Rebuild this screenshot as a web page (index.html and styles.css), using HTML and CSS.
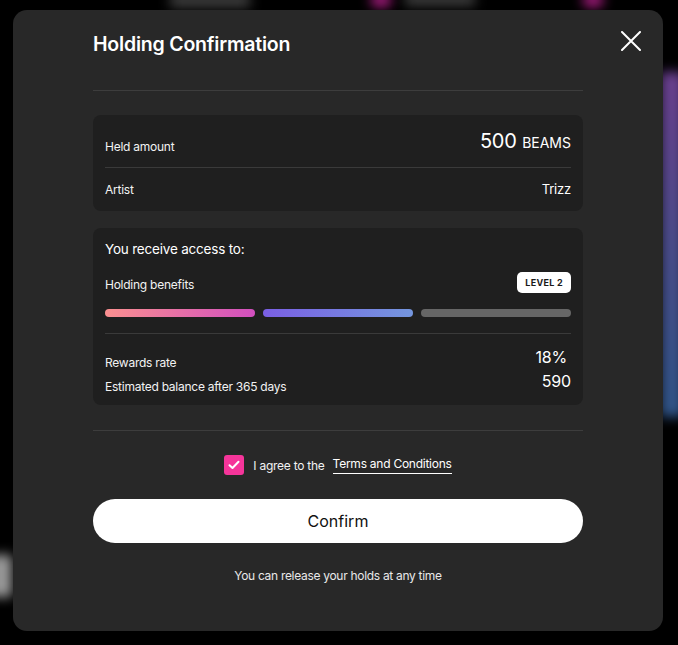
FILE: index.html
```html
<!DOCTYPE html>
<html lang="en">
<head>
  <meta charset="UTF-8">
  <title>Holding Confirmation</title>
  <link rel="stylesheet" href="styles.css">
</head>
<body>

  <div class="backdrop">
    <div class="blob blob-top-a"></div>
    <div class="blob blob-pink-a"></div>
    <div class="blob blob-top-b"></div>
    <div class="blob blob-pink-b"></div>
    <div class="blob blob-left"></div>
    <div class="blob blob-side"></div>
  </div>

  <div class="modal">
    <button class="close-btn" aria-label="Close">
      <svg width="20" height="20" viewBox="0 0 20 20">
        <path d="M1 1 L19 19 M19 1 L1 19" stroke="#fff" stroke-width="2" stroke-linecap="round"/>
      </svg>
    </button>

    <h1>Holding Confirmation</h1>
    <hr class="divider divider-top">

    <div class="card">
      <div class="row row-amount">
        <span class="label">Held amount</span>
        <span class="amount">500 <small>BEAMS</small></span>
      </div>
      <div class="row row-artist">
        <span class="label">Artist</span>
        <span class="value">Trizz</span>
      </div>
    </div>

    <div class="card card-access">
      <div class="access-title">You receive access to:</div>
      <div class="row row-benefits">
        <span class="label">Holding benefits</span>
        <span class="badge">LEVEL 2</span>
      </div>
      <div class="bars">
        <div class="bar bar-pink"></div>
        <div class="bar bar-blue"></div>
        <div class="bar bar-grey"></div>
      </div>
      <div class="stats">
        <div class="row stat-row">
          <span class="label">Rewards rate</span>
          <span class="stat rate">18%</span>
        </div>
        <div class="row stat-row">
          <span class="label">Estimated balance after 365 days</span>
          <span class="stat">590</span>
        </div>
      </div>
    </div>

    <hr class="divider divider-bottom">

    <label class="agree">
      <span class="checkbox">
        <svg width="12" height="10" viewBox="0 0 12 10">
          <path d="M1.5 5.2 L4.5 8 L10.5 1.8" fill="none" stroke="#fff" stroke-width="2" stroke-linecap="round" stroke-linejoin="round"/>
        </svg>
      </span>
      <span>I agree to the</span>
      <a href="#" class="terms">Terms and Conditions</a>
    </label>

    <button class="confirm-btn">Confirm</button>

    <p class="note">You can release your holds at any time</p>
  </div>

</body>
</html>
```

FILE: styles.css
```css
body {
  margin: 0;
  height: 645px;
  overflow: hidden;
  background: #000;
  font-family: 'Inter', 'Noto Sans', sans-serif;
  color: #fff;
  display: flex;
  justify-content: center;
  align-items: flex-start;
}

.backdrop {
  position: absolute;
  inset: 0;
  overflow: hidden;
}

.blob {
  position: absolute;
  filter: blur(6px);
}

.blob-top-a {
  left: 170px;
  top: -8px;
  width: 80px;
  height: 16px;
  background: #3a3a3a;
}

.blob-pink-a {
  left: 370px;
  top: -8px;
  width: 22px;
  height: 16px;
  border-radius: 50%;
  background: #a01a7a;
}

.blob-top-b {
  left: 405px;
  top: -8px;
  width: 70px;
  height: 14px;
  background: #3c3c3c;
}

.blob-pink-b {
  left: 582px;
  top: -8px;
  width: 22px;
  height: 16px;
  border-radius: 50%;
  background: #a01a7a;
}

.blob-left {
  left: -10px;
  top: 555px;
  width: 22px;
  height: 42px;
  background: #9a9a9a;
}

.blob-side {
  right: -6px;
  top: 72px;
  width: 24px;
  height: 345px;
  background: linear-gradient(180deg, #6a3f8e 0%, #4a4c8a 50%, #2f5487 100%);
}

.modal {
  position: relative;
  width: 650px;
  height: 621px;
  margin-top: 10px;
  margin-left: -2px;
  box-sizing: border-box;
  padding: 22px 80px 0;
  background: #282828;
  border-radius: 14px;
  display: flex;
  flex-direction: column;
}

.close-btn {
  position: absolute;
  top: 21px;
  right: 22px;
  width: 20px;
  height: 20px;
  padding: 0;
  border: none;
  background: none;
  cursor: pointer;
}

h1 {
  margin: 0;
  font-size: 19.5px;
  line-height: 24px;
  font-weight: 600;
  letter-spacing: -0.2px;
}

.divider {
  width: 100%;
  border: none;
  border-top: 1px solid #3d3d3d;
  margin: 0;
}

.divider-top {
  margin-top: 34px;
  margin-bottom: 24px;
}

.divider-bottom {
  margin-top: 25px;
  margin-bottom: 24px;
}

.card {
  background: #1f1f1f;
  border-radius: 8px;
  padding: 12px;
}

.card-access {
  margin-top: 17px;
}

.row {
  display: flex;
  justify-content: space-between;
  align-items: baseline;
}

.label {
  font-size: 12px;
  letter-spacing: -0.25px;
  color: #f2f2f2;
}

.row-amount {
  height: 28px;
  align-items: flex-end;
  padding-bottom: 12px;
  border-bottom: 1px solid #3a3a3a;
}

.row-amount .label {
  line-height: 16px;
}

.amount {
  font-size: 20px;
  line-height: 24px;
  letter-spacing: -0.2px;
}

.amount small {
  font-size: 14px;
  letter-spacing: 0;
}

.row-artist {
  padding-top: 12px;
  line-height: 19px;
}

.value {
  font-size: 13px;
  letter-spacing: -0.2px;
}

.access-title {
  font-size: 13.5px;
  line-height: 18px;
  letter-spacing: -0.2px;
}

.row-benefits {
  margin-top: 14px;
  align-items: flex-end;
}

.row-benefits .label {
  line-height: 16px;
}

.badge {
  background: #fff;
  color: #1a1a1a;
  font-size: 9px;
  font-weight: 700;
  letter-spacing: 0.3px;
  height: 21px;
  line-height: 21px;
  padding: 0 8px;
  border-radius: 5px;
}

.bars {
  display: flex;
  gap: 8px;
  margin-top: 16px;
  padding-bottom: 16px;
  border-bottom: 1px solid #3a3a3a;
}

.bar {
  flex: 1;
  height: 8px;
  border-radius: 4px;
}

.bar-pink {
  background: linear-gradient(90deg, #fb9090, #d24fbf);
}

.bar-blue {
  background: linear-gradient(90deg, #7a5fe4, #7496de);
}

.bar-grey {
  background: #666;
}

.stats {
  padding-top: 11px;
}

.stat-row {
  height: 24px;
  align-items: flex-end;
}

.stat-row .label {
  line-height: 13px;
}

.stat {
  font-size: 16px;
  line-height: 24px;
  letter-spacing: -0.2px;
}

.rate {
  margin-right: 4px;
}

.agree {
  display: flex;
  justify-content: center;
  align-items: center;
  font-size: 12px;
  letter-spacing: -0.25px;
  color: #f2f2f2;
  cursor: pointer;
}

.checkbox {
  width: 20px;
  height: 20px;
  border-radius: 3px;
  background: #f5359a;
  display: flex;
  align-items: center;
  justify-content: center;
  margin-right: 9px;
}

.terms {
  margin-left: 8px;
  color: #fff;
  text-decoration: none;
  border-bottom: 1px solid #fff;
  padding-bottom: 2px;
}

.confirm-btn {
  margin-top: 24px;
  height: 44px;
  width: 100%;
  border: none;
  border-radius: 22px;
  background: #fff;
  color: #111;
  font-family: inherit;
  font-size: 16px;
  font-weight: 400;
  cursor: pointer;
}

.note {
  margin: 25px 0 0;
  text-align: center;
  font-size: 12px;
  line-height: 16px;
  letter-spacing: -0.3px;
  color: #e8e8e8;
}
```
